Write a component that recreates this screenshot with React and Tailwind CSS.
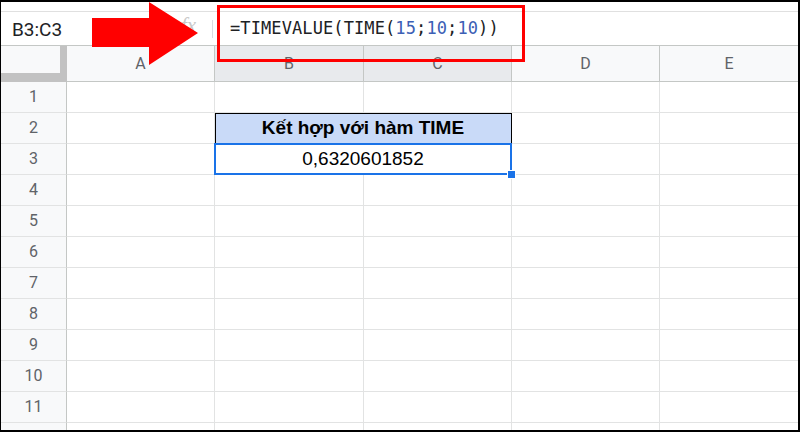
const COLS = [
  { key: "A", w: "w-[148px]" },
  { key: "B", w: "w-[149px]", sel: true },
  { key: "C", w: "w-[148px]", sel: true },
  { key: "D", w: "w-[148px]" },
];

const ROWS = [1, 2, 3, 4, 5, 6, 7, 8, 9, 10, 11, 12];

// row 12 is only a sliver at the bottom, its number is out of view
const RowHead = ({ n }) => (
  <div className="w-[66px] shrink-0 h-full flex items-center justify-center bg-[#f8f9fa] border-r border-b border-r-[#c4c7c5] border-b-[#e2e3e3] text-[16px] text-[#5f6368]">
    {n < 12 ? n : null}
  </div>
);

const Cell = ({ w }) => (
  <div className={`${w} shrink-0 h-full border-r border-b border-[#e2e3e3]`}></div>
);

const Tail = () => <div className="flex-1 h-full border-b border-[#e2e3e3]"></div>;

const Formula = () => (
  <span className="font-['DejaVu_Sans_Mono',monospace] text-[17px] text-[#202124] tracking-[0.1px]">
    =TIMEVALUE(TIME(<span className="text-[#3c5fb5]">15</span>;
    <span className="text-[#3c5fb5]">10</span>;
    <span className="text-[#3c5fb5]">10</span>))
  </span>
);

const Row = ({ n }) => {
  if (n === 2) {
    return (
      <div className="flex h-[31px]">
        <RowHead n={n} />
        <Cell w="w-[148px]" />
        <div className="w-[297px] shrink-0 h-full bg-[#c9daf8] border-r border-b border-black shadow-[inset_1px_1px_0_#000] flex items-center justify-center font-['Liberation_Sans',Arial,sans-serif] font-bold text-[19px] text-black">
          Kết hợp với hàm TIME
        </div>
        <Cell w="w-[148px]" />
        <Tail />
      </div>
    );
  }
  if (n === 3) {
    return (
      <div className="flex h-[31px]">
        <RowHead n={n} />
        <Cell w="w-[148px]" />
        <div className="relative w-[297px] shrink-0 h-full border-r border-b border-[#e2e3e3] flex items-center justify-center font-['Liberation_Sans',Arial,sans-serif] text-[19px] text-black">
          0,6320601852
          <div className="absolute -top-px -left-px -right-px -bottom-px border-2 border-[#1a73e8]"></div>
          <div className="absolute -right-[5px] -bottom-[5px] w-[9px] h-[9px] bg-[#1a73e8] border border-white z-10"></div>
        </div>
        <Cell w="w-[148px]" />
        <Tail />
      </div>
    );
  }
  return (
    <div className="flex h-[31px]">
      <RowHead n={n} />
      {COLS.map((c) => (
        <Cell key={c.key} w={c.w} />
      ))}
      <Tail />
    </div>
  );
};

export default function App() {
  return (
    <div className="relative w-[800px] h-[432px] overflow-hidden bg-white border-t-2 border-l border-r-2 border-b-2 border-black font-['Roboto',sans-serif]">
      {/* top strip */}
      <div className="h-[10px] border-b border-[#e0e0e0]"></div>

      {/* formula bar */}
      <div className="h-[34px] flex items-center border-b border-[#c4c7c5]">
        <div className="w-[176px] shrink-0 pl-[11px] pt-[4px] text-[19px] text-[#202124]">B3:C3</div>
        <div className="w-[35px] shrink-0 pl-[4px] pb-[6px] text-[21px] leading-none italic font-['Liberation_Serif',serif] text-[#c9c9c9]">
          fx
        </div>
        <div className="w-px h-[18px] bg-[#dadce0] shrink-0"></div>
        <div className="pl-[17px] pt-[1px]">
          <Formula />
        </div>
      </div>

      {/* column headers */}
      <div className="flex h-[36px]">
        <div className="w-[66px] shrink-0 h-full bg-[#f8f9fa] border-r-[7px] border-b-[9px] border-[#c2c2c2]"></div>
        {COLS.map((c) => (
          <div
            key={c.key}
            className={`${c.w} shrink-0 h-full flex items-center justify-center border-r border-b border-[#c4c7c5] text-[16px] text-[#5f6368] ${
              c.sel ? "bg-[#e8eaed]" : "bg-[#f8f9fa]"
            }`}
          >
            {c.key}
          </div>
        ))}
        <div className="flex-1 h-full flex items-center justify-center bg-[#f8f9fa] border-b border-[#c4c7c5] text-[16px] text-[#5f6368]">
          E
        </div>
      </div>

      {ROWS.map((n) => (
        <Row key={n} n={n} />
      ))}

      {/* red annotation box */}
      <div className="absolute left-[216px] top-[3px] w-[308px] h-[57px] border-[3px] border-[#ff0000]"></div>

      {/* red arrow */}
      <svg className="absolute left-[91px] top-0" width="108" height="66" viewBox="0 0 108 66">
        <polygon points="0,16 57,16 57,0 106,31 57,63 57,45 0,45" fill="#ff0000" />
      </svg>
    </div>
  );
}
